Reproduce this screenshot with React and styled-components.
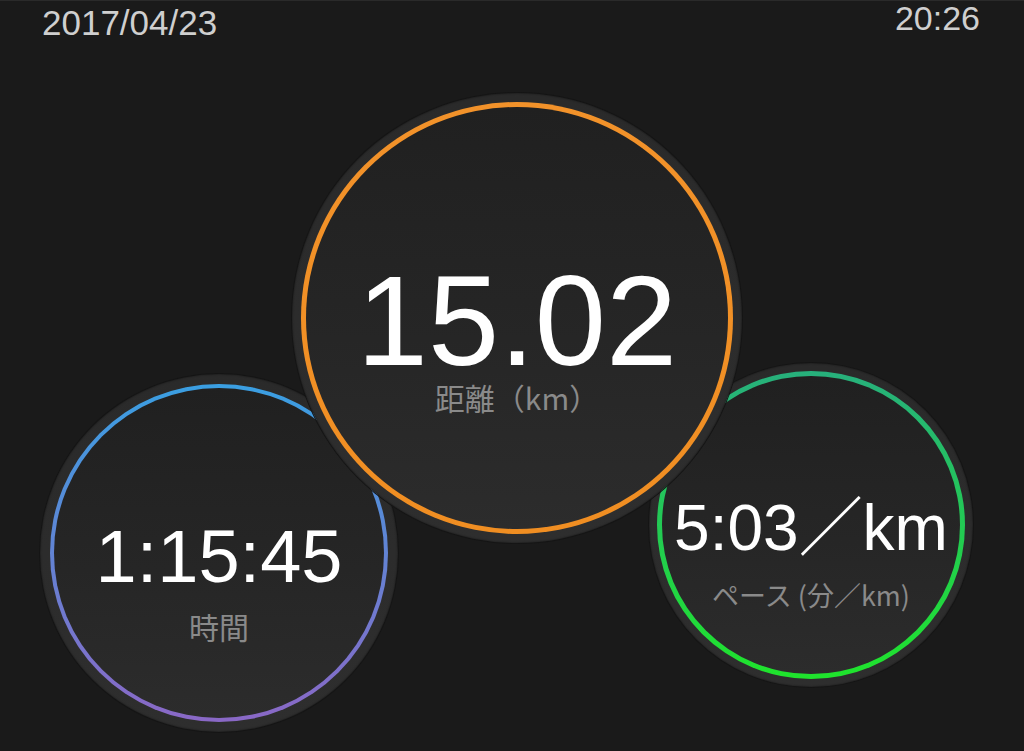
import React from "react";
import styled, { createGlobalStyle } from "styled-components";

const GlobalStyle = createGlobalStyle`
  html, body {
    margin: 0;
    padding: 0;
    background: #1a1a1a;
  }
`;

const Screen = styled.div`
  position: relative;
  width: 1024px;
  height: 751px;
  overflow: hidden;
  background: #1a1a1a;
  font-family: "Liberation Sans", "Noto Sans CJK JP", sans-serif;
  border-top: 1px solid #2a2a2a;
  box-sizing: border-box;
`;

const StatusBar = styled.div`
  display: flex;
  justify-content: space-between;
  align-items: flex-start;
  padding: 0 44px 0 42px;
`;

const DateText = styled.div`
  margin-top: 4px;
  font-size: 35px;
  line-height: 1;
  color: #cfcfcf;
`;

const TimeText = styled.div`
  font-size: 34px;
  line-height: 1;
  color: #cfcfcf;
`;

// outer dark band around each gauge
const Gauge = styled.div`
  position: absolute;
  left: ${({ x }) => x}px;
  top: ${({ y }) => y}px;
  width: ${({ size }) => size}px;
  height: ${({ size }) => size}px;
  z-index: ${({ layer }) => layer || 1};
  box-sizing: border-box;
  padding: ${({ band }) => band}px;
  border-radius: 50%;
  background: linear-gradient(180deg, #2a2a2a 0%, #2e2e2e 100%);
  box-shadow: 0 0 0 1px #151515, inset 0 0 2px rgba(0, 0, 0, 0.6);
`;

const Ring = styled.div`
  width: 100%;
  height: 100%;
  box-sizing: border-box;
  padding: ${({ thick }) => thick}px;
  border-radius: 50%;
  background: linear-gradient(180deg, ${({ from }) => from} 0%, ${({ to }) => to} 100%);
`;

const Face = styled.div`
  width: 100%;
  height: 100%;
  box-sizing: border-box;
  border-radius: 50%;
  background: linear-gradient(180deg, #202020 0%, #262626 55%, #2c2c2c 100%);
  display: flex;
  flex-direction: column;
  align-items: center;
  justify-content: center;
  padding-top: ${({ shift }) => shift}px;
`;

const Value = styled.div`
  font-size: ${({ size }) => size}px;
  line-height: 0.9;
  color: #ffffff;
  white-space: nowrap;
`;

const Label = styled.div`
  margin-top: ${({ gap }) => gap}px;
  font-family: "Noto Sans CJK JP", "Liberation Sans", sans-serif;
  font-size: ${({ size }) => size}px;
  line-height: 1;
  color: #8a8a8a;
  white-space: nowrap;
`;

const gauges = [
  {
    key: "time",
    x: 40, y: 373, size: 358, band: 10, thick: 4,
    from: "#3a9fe2", to: "#8a68c6",
    shift: 59, value: "1:15:45", valueSize: 74,
    label: "時間", labelSize: 30, gap: 20, layer: 1,
  },
  {
    key: "pace",
    x: 649, y: 362, size: 324, band: 8, thick: 5,
    from: "#27b07c", to: "#1fe42c",
    shift: 58, value: "5:03／km", valueSize: 64,
    label: "ペース (分／km)", labelSize: 27, gap: 24, layer: 1,
  },
  {
    key: "distance",
    x: 292, y: 92, size: 450, band: 9, thick: 5,
    from: "#f2922a", to: "#f08e22",
    shift: 39, value: "15.02", valueSize: 128,
    label: "距離（km）", labelSize: 30, gap: 3, layer: 2,
  },
];

const App = () => {
  return (
    <>
      <GlobalStyle />
      <Screen>
        <StatusBar>
          <DateText>2017/04/23</DateText>
          <TimeText>20:26</TimeText>
        </StatusBar>

        {gauges.map((g) => (
          <Gauge key={g.key} x={g.x} y={g.y} size={g.size} band={g.band} layer={g.layer}>
            <Ring thick={g.thick} from={g.from} to={g.to}>
              <Face shift={g.shift}>
                <Value size={g.valueSize}>{g.value}</Value>
                <Label size={g.labelSize} gap={g.gap}>{g.label}</Label>
              </Face>
            </Ring>
          </Gauge>
        ))}
      </Screen>
    </>
  );
};

export default App;
